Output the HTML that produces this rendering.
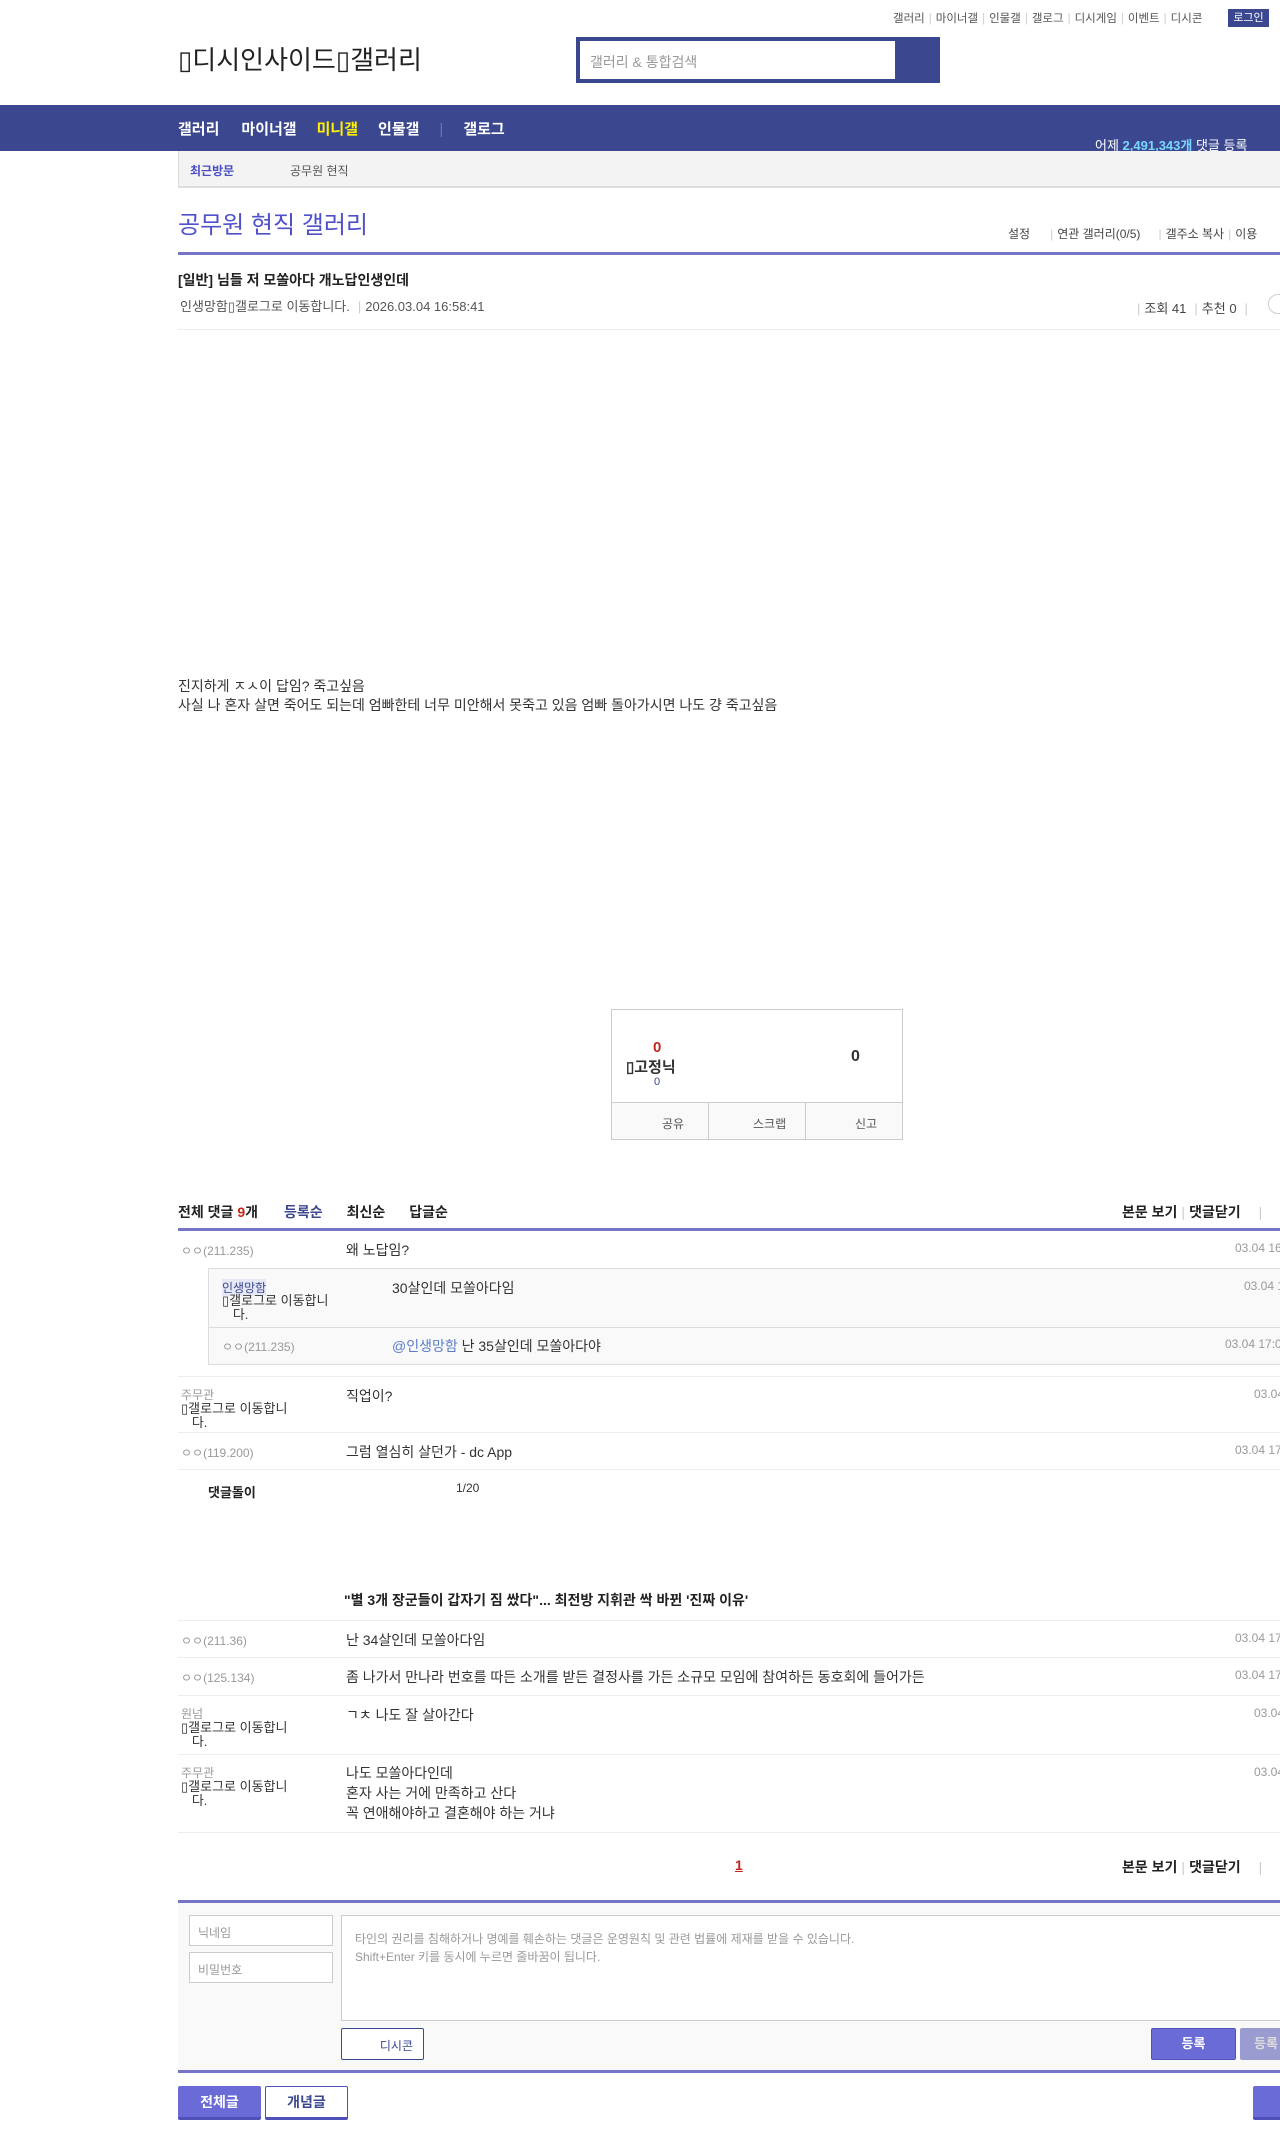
<!DOCTYPE html>
<html><head><meta charset="utf-8">
<style>
*{margin:0;padding:0;box-sizing:border-box}
body{width:1280px;height:2150px;background:#fff;font-family:"Liberation Sans","Noto Sans CJK KR",sans-serif;font-size:14px;color:#333;position:relative;overflow:hidden}
.a{position:absolute;white-space:nowrap}
.ln{position:absolute;left:178px;right:0;height:1px;background:#eee}
.g{color:#999;font-size:12px}
.d{color:#999;font-size:12px}
.br{color:#ccc;padding:0 4px}
.gl{font-size:13px;line-height:14px}
</style></head><body>
<div class="a" style="top:10px;left:893px;font-size:11.5px;color:#555">갤러리<span class="br">|</span>마이너갤<span class="br">|</span>인물갤<span class="br">|</span>갤로그<span class="br">|</span>디시게임<span class="br">|</span>이벤트<span class="br">|</span>디시콘</div>
<div class="a" style="top:9px;left:1228px;width:41px;height:18px;background:#3b4890;color:#fff;font-size:11px;text-align:center;line-height:18px">로그인</div>
<div class="a" style="top:40px;left:178px;font-size:26px;color:#222">▯디시인사이드▯갤러리</div>
<div class="a" style="top:37px;left:576px;width:364px;height:46px;background:#3b4890"></div>
<div class="a" style="top:41px;left:580px;width:315px;height:38px;background:#fff;color:#999;font-size:14px;padding:11px 10px">갤러리 &amp; 통합검색</div>
<div class="a" style="top:105px;left:0;width:1280px;height:46px;background:#3b4890"></div>
<div class="a" style="top:118px;left:178px;font-size:15px;font-weight:bold;color:#fff">갤러리<span style="margin-left:22px">마이너갤</span><span style="margin-left:20px;color:#fff000">미니갤</span><span style="margin-left:20px">인물갤</span><span style="margin-left:20px;color:#6a75b5;font-weight:normal">|</span><span style="margin-left:20px">갤로그</span></div>
<div class="a" style="top:135px;left:1095px;font-size:13px;color:#fff">어제 <b style="color:#79d6ff">2,491,343개</b> 댓글 등록</div>
<div class="a" style="top:151px;left:178px;width:1102px;height:37px;background:#f3f3f3;border-bottom:2px solid #ddd;border-left:1px solid #ddd"></div>
<div class="a" style="top:162px;left:190px;font-size:12px;color:#4b4ec3;font-weight:bold">최근방문</div>
<div class="a" style="top:162px;left:290px;font-size:12px;color:#555">공무원 현직</div>
<div class="a" style="top:205px;left:178px;font-size:24px;color:#4f51c9">공무원 현직 갤러리</div>
<div class="a" style="top:225px;left:1008px;font-size:12px;color:#444">설정<span class="br" style="margin-left:16px">|</span>연관 갤러리(0/5)<span class="br" style="margin-left:14px">|</span>갤주소 복사<span class="br">|</span>이용</div>
<div class="a" style="top:252px;left:178px;width:1102px;height:3px;background:#7574c7"></div>
<div class="a" style="top:270px;left:178px;font-size:14px;font-weight:bold;color:#222">[일반] 님들 저 모쏠아다 개노답인생인데</div>
<div class="a" style="top:296px;left:180px;font-size:13px;color:#555">인생망함▯갤로그로 이동합니다.<span class="br" style="margin-left:4px">|</span>2026.03.04 16:58:41</div>
<div class="a" style="top:298px;left:1133px;font-size:13px;color:#444"><span class="br">|</span>조회 41<span class="br" style="margin-left:4px">|</span>추천 0<span class="br" style="margin-left:4px">|</span></div>
<div class="a" style="top:294px;left:1268px;width:20px;height:20px;border:1px solid #ccc;border-radius:50%"></div>
<div class="a" style="top:329px;left:178px;width:1102px;height:1px;background:#eee"></div>
<div class="a" style="top:677px;left:178px;font-size:14px;color:#333;line-height:19px">진지하게 ㅈㅅ이 답임? 죽고싶음<br>사실 나 혼자 살면 죽어도 되는데 엄빠한테 너무 미안해서 못죽고 있음 엄빠 돌아가시면 나도 걍 죽고싶음</div>
<div class="a" style="top:1009px;left:611px;width:292px;height:131px;border:1px solid #ccc"></div>
<div class="a" style="top:1102px;left:612px;width:290px;height:37px;background:#f9f9f9;border-top:1px solid #ccc"></div>
<div class="a" style="top:1102px;left:708px;width:1px;height:37px;background:#ccc"></div>
<div class="a" style="top:1102px;left:805px;width:1px;height:37px;background:#ccc"></div>
<div class="a" style="top:1115px;left:662px;font-size:12px;color:#555">공유</div>
<div class="a" style="top:1115px;left:753px;font-size:12px;color:#555">스크랩</div>
<div class="a" style="top:1115px;left:855px;font-size:12px;color:#555">신고</div>
<div class="a" style="top:1039px;left:653px;font-size:15px;font-weight:bold;color:#c4261b">0</div>
<div class="a" style="top:1056px;left:626px;font-size:15px;font-weight:bold;color:#333">▯고정닉</div>
<div class="a" style="top:1076px;left:654px;font-size:11px;color:#3b4890">0</div>
<div class="a" style="top:1048px;left:851px;font-size:16px;font-weight:bold;color:#333">0</div>
<div class="a" style="top:1202px;left:178px;font-size:14px;font-weight:bold;color:#222">전체 댓글 <span style="color:#c4261b">9</span>개<span style="margin-left:26px;color:#3b4890">등록순</span><span style="margin-left:24px">최신순</span><span style="margin-left:24px">답글순</span></div>
<div class="a" style="top:1202px;left:1122px;font-size:14px;font-weight:bold;color:#222">본문 보기<span class="br" style="font-weight:normal">|</span>댓글닫기<span class="br" style="margin-left:14px;font-weight:normal">|</span></div>
<div class="a" style="top:1228px;left:178px;width:1102px;height:3px;background:#7574c7"></div>
<div class="a g" style="top:1242px;left:181px">ㅇㅇ(211.235)</div>
<div class="a" style="top:1240px;left:346px">왜 노답임?</div>
<div class="a d" style="top:1241px;left:1235px">03.04 16</div>
<div class="a" style="top:1268px;left:208px;width:1080px;height:97px;background:#f9f9f9;border:1px solid #ddd"></div>
<div class="a" style="top:1327px;left:208px;width:1072px;height:1px;background:#ddd"></div>
<div class="a" style="top:1279px;left:222px;font-size:12px;color:#3b4890;background:#e6e8f5">인생망함</div>
<div class="a gl" style="top:1294px;left:222px;color:#333">▯갤로그로 이동합니<br>&nbsp;&nbsp;&nbsp;다.</div>
<div class="a" style="top:1278px;left:392px">30살인데 모쏠아다임</div>
<div class="a d" style="top:1279px;left:1244px">03.04 1</div>
<div class="a g" style="top:1338px;left:222px">ㅇㅇ(211.235)</div>
<div class="a" style="top:1336px;left:392px"><span style="color:#5a7dc9">@인생망함</span> 난 35살인데 모쏠아다야</div>
<div class="a d" style="top:1337px;left:1225px">03.04 17:0</div>
<div class="ln" style="top:1376px"></div>
<div class="a g" style="top:1386px;left:181px">주무관</div>
<div class="a gl" style="top:1402px;left:181px">▯갤로그로 이동합니<br>&nbsp;&nbsp;&nbsp;다.</div>
<div class="a" style="top:1386px;left:346px">직업이?</div>
<div class="a d" style="top:1387px;left:1254px">03.04</div>
<div class="ln" style="top:1432px"></div>
<div class="a g" style="top:1444px;left:181px">ㅇㅇ(119.200)</div>
<div class="a" style="top:1442px;left:346px">그럼 열심히 살던가 - dc App</div>
<div class="a d" style="top:1443px;left:1235px">03.04 17</div>
<div class="ln" style="top:1469px"></div>
<div class="a" style="top:1482px;left:208px;font-size:13px;font-weight:bold;color:#222">댓글돌이</div>
<div class="a" style="top:1481px;left:456px;font-size:12px;color:#333">1/20</div>
<div class="a" style="top:1590px;left:344px;font-size:14px;font-weight:bold;color:#222">"별 3개 장군들이 갑자기 짐 쌌다"... 최전방 지휘관 싹 바뀐 '진짜 이유'</div>
<div class="ln" style="top:1620px"></div>
<div class="a g" style="top:1632px;left:181px">ㅇㅇ(211.36)</div>
<div class="a" style="top:1630px;left:346px">난 34살인데 모쏠아다임</div>
<div class="a d" style="top:1631px;left:1235px">03.04 17</div>
<div class="ln" style="top:1657px"></div>
<div class="a g" style="top:1669px;left:181px">ㅇㅇ(125.134)</div>
<div class="a" style="top:1667px;left:346px">좀 나가서 만나라 번호를 따든 소개를 받든 결정사를 가든 소규모 모임에 참여하든 동호회에 들어가든</div>
<div class="a d" style="top:1668px;left:1235px">03.04 17</div>
<div class="ln" style="top:1695px"></div>
<div class="a g" style="top:1705px;left:181px">원넘</div>
<div class="a gl" style="top:1721px;left:181px">▯갤로그로 이동합니<br>&nbsp;&nbsp;&nbsp;다.</div>
<div class="a" style="top:1705px;left:346px">ㄱㅊ 나도 잘 살아간다</div>
<div class="a d" style="top:1706px;left:1254px">03.04</div>
<div class="ln" style="top:1754px"></div>
<div class="a g" style="top:1764px;left:181px">주무관</div>
<div class="a gl" style="top:1780px;left:181px">▯갤로그로 이동합니<br>&nbsp;&nbsp;&nbsp;다.</div>
<div class="a" style="top:1763px;left:346px;line-height:20px">나도 모쏠아다인데<br>혼자 사는 거에 만족하고 산다<br>꼭 연애해야하고 결혼해야 하는 거냐</div>
<div class="a d" style="top:1765px;left:1254px">03.04</div>
<div class="ln" style="top:1832px"></div>
<div class="a" style="top:1857px;left:735px;font-size:14px;font-weight:bold;color:#c4261b;text-decoration:underline">1</div>
<div class="a" style="top:1857px;left:1122px;font-size:14px;font-weight:bold;color:#222">본문 보기<span class="br" style="font-weight:normal">|</span>댓글닫기<span class="br" style="margin-left:14px;font-weight:normal">|</span></div>
<div class="a" style="top:1900px;left:178px;width:1102px;height:173px;background:#f9f9f9;border-top:3px solid #7574c7;border-bottom:3px solid #7574c7"></div>
<div class="a" style="top:1915px;left:189px;width:144px;height:31px;background:#fff;border:1px solid #ccc;color:#999;font-size:12px;padding:8px 8px">닉네임</div>
<div class="a" style="top:1952px;left:189px;width:144px;height:31px;background:#fff;border:1px solid #ccc;color:#999;font-size:12px;padding:8px 8px">비밀번호</div>
<div class="a" style="top:1915px;left:341px;width:950px;height:106px;background:#fff;border:1px solid #ccc;color:#999;font-size:12px;padding:14px 13px;line-height:18px">타인의 권리를 침해하거나 명예를 훼손하는 댓글은 운영원칙 및 관련 법률에 제재를 받을 수 있습니다.<br>Shift+Enter 키를 동시에 누르면 줄바꿈이 됩니다.</div>
<div class="a" style="top:2028px;left:341px;width:83px;height:32px;background:#fff;border:1px solid #3b4890;border-radius:2px;color:#3b4890;font-size:12px;text-align:right;padding:8px 10px">디시콘</div>
<div class="a" style="top:2028px;left:1151px;width:85px;height:32px;background:#6a6bd6;border:1px solid #4f50b8;border-radius:2px;color:#fff;font-size:13px;font-weight:bold;text-align:center;line-height:30px">등록</div>
<div class="a" style="top:2028px;left:1240px;width:60px;height:32px;background:#9a9bd0;border-radius:2px;color:#ddd;font-size:13px;font-weight:bold;padding-left:14px;line-height:32px">등록</div>
<div class="a" style="top:2086px;left:178px;width:83px;height:34px;background:#6a6bd6;border-bottom:3px solid #4f50b8;color:#fff;font-size:14px;font-weight:bold;text-align:center;line-height:32px;border-radius:2px">전체글</div>
<div class="a" style="top:2086px;left:265px;width:83px;height:34px;background:#fff;border:1px solid #4f50b8;border-bottom:3px solid #4f50b8;color:#3b4890;font-size:14px;font-weight:bold;text-align:center;line-height:30px;border-radius:2px">개념글</div>
<div class="a" style="top:2086px;left:1253px;width:60px;height:34px;background:#6a6bd6;border-bottom:3px solid #4f50b8;border-radius:2px"></div>
</body></html>
